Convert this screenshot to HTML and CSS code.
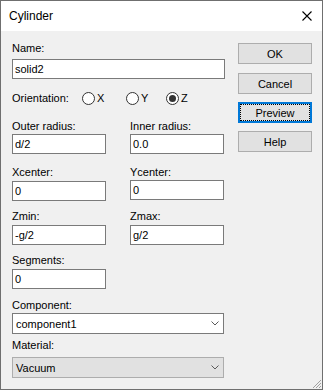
FILE: index.html
```html
<!DOCTYPE html>
<html lang="en">
<head>
    <meta charset="UTF-8">
    <title>Cylinder</title>
    <link rel="stylesheet" href="styles.css">
</head>
<body>
<div class="window">
    <div class="titlebar">
        <span class="title">Cylinder</span>
        <svg class="close" width="10" height="10" viewBox="0 0 10 10">
            <path d="M0.5 0.5 L9.5 9.5 M9.5 0.5 L0.5 9.5" stroke="#000" stroke-width="1.1" fill="none"/>
        </svg>
    </div>
    <div class="dialog">
        <form class="form" action="" method="get">
            <div class="label">Name:</div>
            <input class="field name-field" type="text" value="solid2">

            <div class="orientation">
                <span class="orient-label">Orientation:</span>
                <label class="radio radio-x"><span class="dot"></span><span>X</span></label>
                <label class="radio radio-y"><span class="dot"></span><span>Y</span></label>
                <label class="radio radio-z"><span class="dot checked"></span><span>Z</span></label>
            </div>

            <div class="pair pair-radius">
                <div>
                    <div class="label">Outer radius:</div>
                    <input class="field" type="text" value="d/2">
                </div>
                <div>
                    <div class="label">Inner radius:</div>
                    <input class="field" type="text" value="0.0">
                </div>
            </div>

            <div class="pair pair-center">
                <div>
                    <div class="label label-tight">Xcenter:</div>
                    <input class="field" type="text" value="0">
                </div>
                <div>
                    <div class="label label-tight">Ycenter:</div>
                    <input class="field raise" type="text" value="0">
                </div>
            </div>

            <div class="pair pair-z">
                <div>
                    <div class="label label-tight">Zmin:</div>
                    <input class="field" type="text" value="-g/2">
                </div>
                <div>
                    <div class="label label-tight">Zmax:</div>
                    <input class="field" type="text" value="g/2">
                </div>
            </div>

            <div class="single">
                <div class="label label-tight">Segments:</div>
                <input class="field short" type="text" value="0">
            </div>

            <div class="label label-component">Component:</div>
            <div class="combo">
                <span>component1</span>
                <svg width="8" height="5" viewBox="0 0 8 5"><path d="M0.5 0.5 L4 4 L7.5 0.5" stroke="#5a5a5a" fill="none"/></svg>
            </div>

            <div class="label label-material">Material:</div>
            <div class="combo combo-list">
                <span>Vacuum</span>
                <svg width="8" height="5" viewBox="0 0 8 5"><path d="M0.5 0.5 L4 4 L7.5 0.5" stroke="#5a5a5a" fill="none"/></svg>
            </div>
        </form>

        <div class="buttons">
            <button type="button" class="btn">OK</button>
            <button type="button" class="btn btn-cancel">Cancel</button>
            <button type="button" class="btn btn-focus">Preview</button>
            <button type="button" class="btn">Help</button>
        </div>
    </div>
    <svg class="grip" width="11" height="11" viewBox="0 0 11 11">
        <path d="M10 2 L2 10 M10 5 L5 10 M10 8 L8 10" stroke="#a0a0a0" fill="none"/>
    </svg>
</div>
</body>
</html>
```

FILE: styles.css
```css
html, body, div, form, input, button, label {
    margin: 0;
    padding: 0;
}

body {
    font-family: "Liberation Sans", Arial, sans-serif;
    font-size: 11px;
    color: #000;
}

.window {
    position: relative;
    width: 323px;
    height: 390px;
    box-sizing: border-box;
    border: 1px solid #6f6f6f;
    background: #f0f0f0;
}

.titlebar {
    height: 30px;
    background: #fff;
    display: flex;
    align-items: center;
    justify-content: space-between;
    padding: 0 10px 0 8px;
}

.title {
    font-size: 12px;
}

.close {
    display: block;
    margin-top: 0;
}

.dialog {
    display: flex;
    padding: 10px 0 0 11px;
}

.form {
    width: 212px;
}

.label {
    height: 15px;
    line-height: 15px;
    white-space: nowrap;
}

.field {
    display: block;
    box-sizing: border-box;
    width: 94px;
    height: 20px;
    border: 1px solid #7a7a7a;
    background: #fff;
    padding: 0 2px;
    font-family: "Liberation Sans", Arial, sans-serif;
    font-size: 11px;
    color: #000;
    outline: none;
}

.name-field {
    width: 213px;
    margin-top: 3px;
}

.raise {
    margin-top: -1px;
}

.orientation {
    display: flex;
    align-items: center;
    height: 13px;
    line-height: 13px;
    margin-top: 13px;
}

.orient-label {
    width: 70px;
}

.radio {
    display: flex;
    align-items: center;
    gap: 2px;
}

.radio-x {
    width: 44px;
}

.radio-y {
    width: 40px;
}

.dot {
    position: relative;
    width: 13px;
    height: 13px;
    box-sizing: border-box;
    border: 1px solid #333;
    border-radius: 50%;
    background: #fff;
}

.dot.checked::after {
    content: "";
    position: absolute;
    left: 2px;
    top: 2px;
    width: 7px;
    height: 7px;
    border-radius: 50%;
    background: #333;
}

.pair {
    display: grid;
    grid-template-columns: 94px 94px;
    column-gap: 24px;
}

.pair-radius {
    margin-top: 14px;
}

.pair-center {
    margin-top: 11px;
}

.pair-z, .single {
    margin-top: 8px;
}

.label-tight {
    margin-bottom: 1px;
}

.label-component {
    margin-top: 9px;
}

.label-material {
    margin-top: 4px;
    margin-bottom: 4px;
}

.combo {
    display: flex;
    align-items: center;
    justify-content: space-between;
    box-sizing: border-box;
    width: 212px;
    height: 21px;
    border: 1px solid #7a7a7a;
    background: #fff;
    padding: 0 4px 0 3px;
}

.combo svg {
    display: block;
}

.combo-list {
    background: #e1e1e1;
    border-color: #adadad;
}

.buttons {
    display: flex;
    flex-direction: column;
    gap: 8px;
    margin: 2px 0 0 14px;
}

.btn {
    box-sizing: border-box;
    width: 74px;
    height: 21px;
    border: 1px solid #adadad;
    background: #e1e1e1;
    font-family: "Liberation Sans", Arial, sans-serif;
    font-size: 11px;
    color: #000;
    padding: 0;
}

.btn-cancel {
    margin-top: 1px;
}

.btn-focus {
    border: 2px solid #0078d7;
    outline: 1px dotted #000;
    outline-offset: -3px;
}

.grip {
    position: absolute;
    right: 0;
    bottom: 0;
}
```
